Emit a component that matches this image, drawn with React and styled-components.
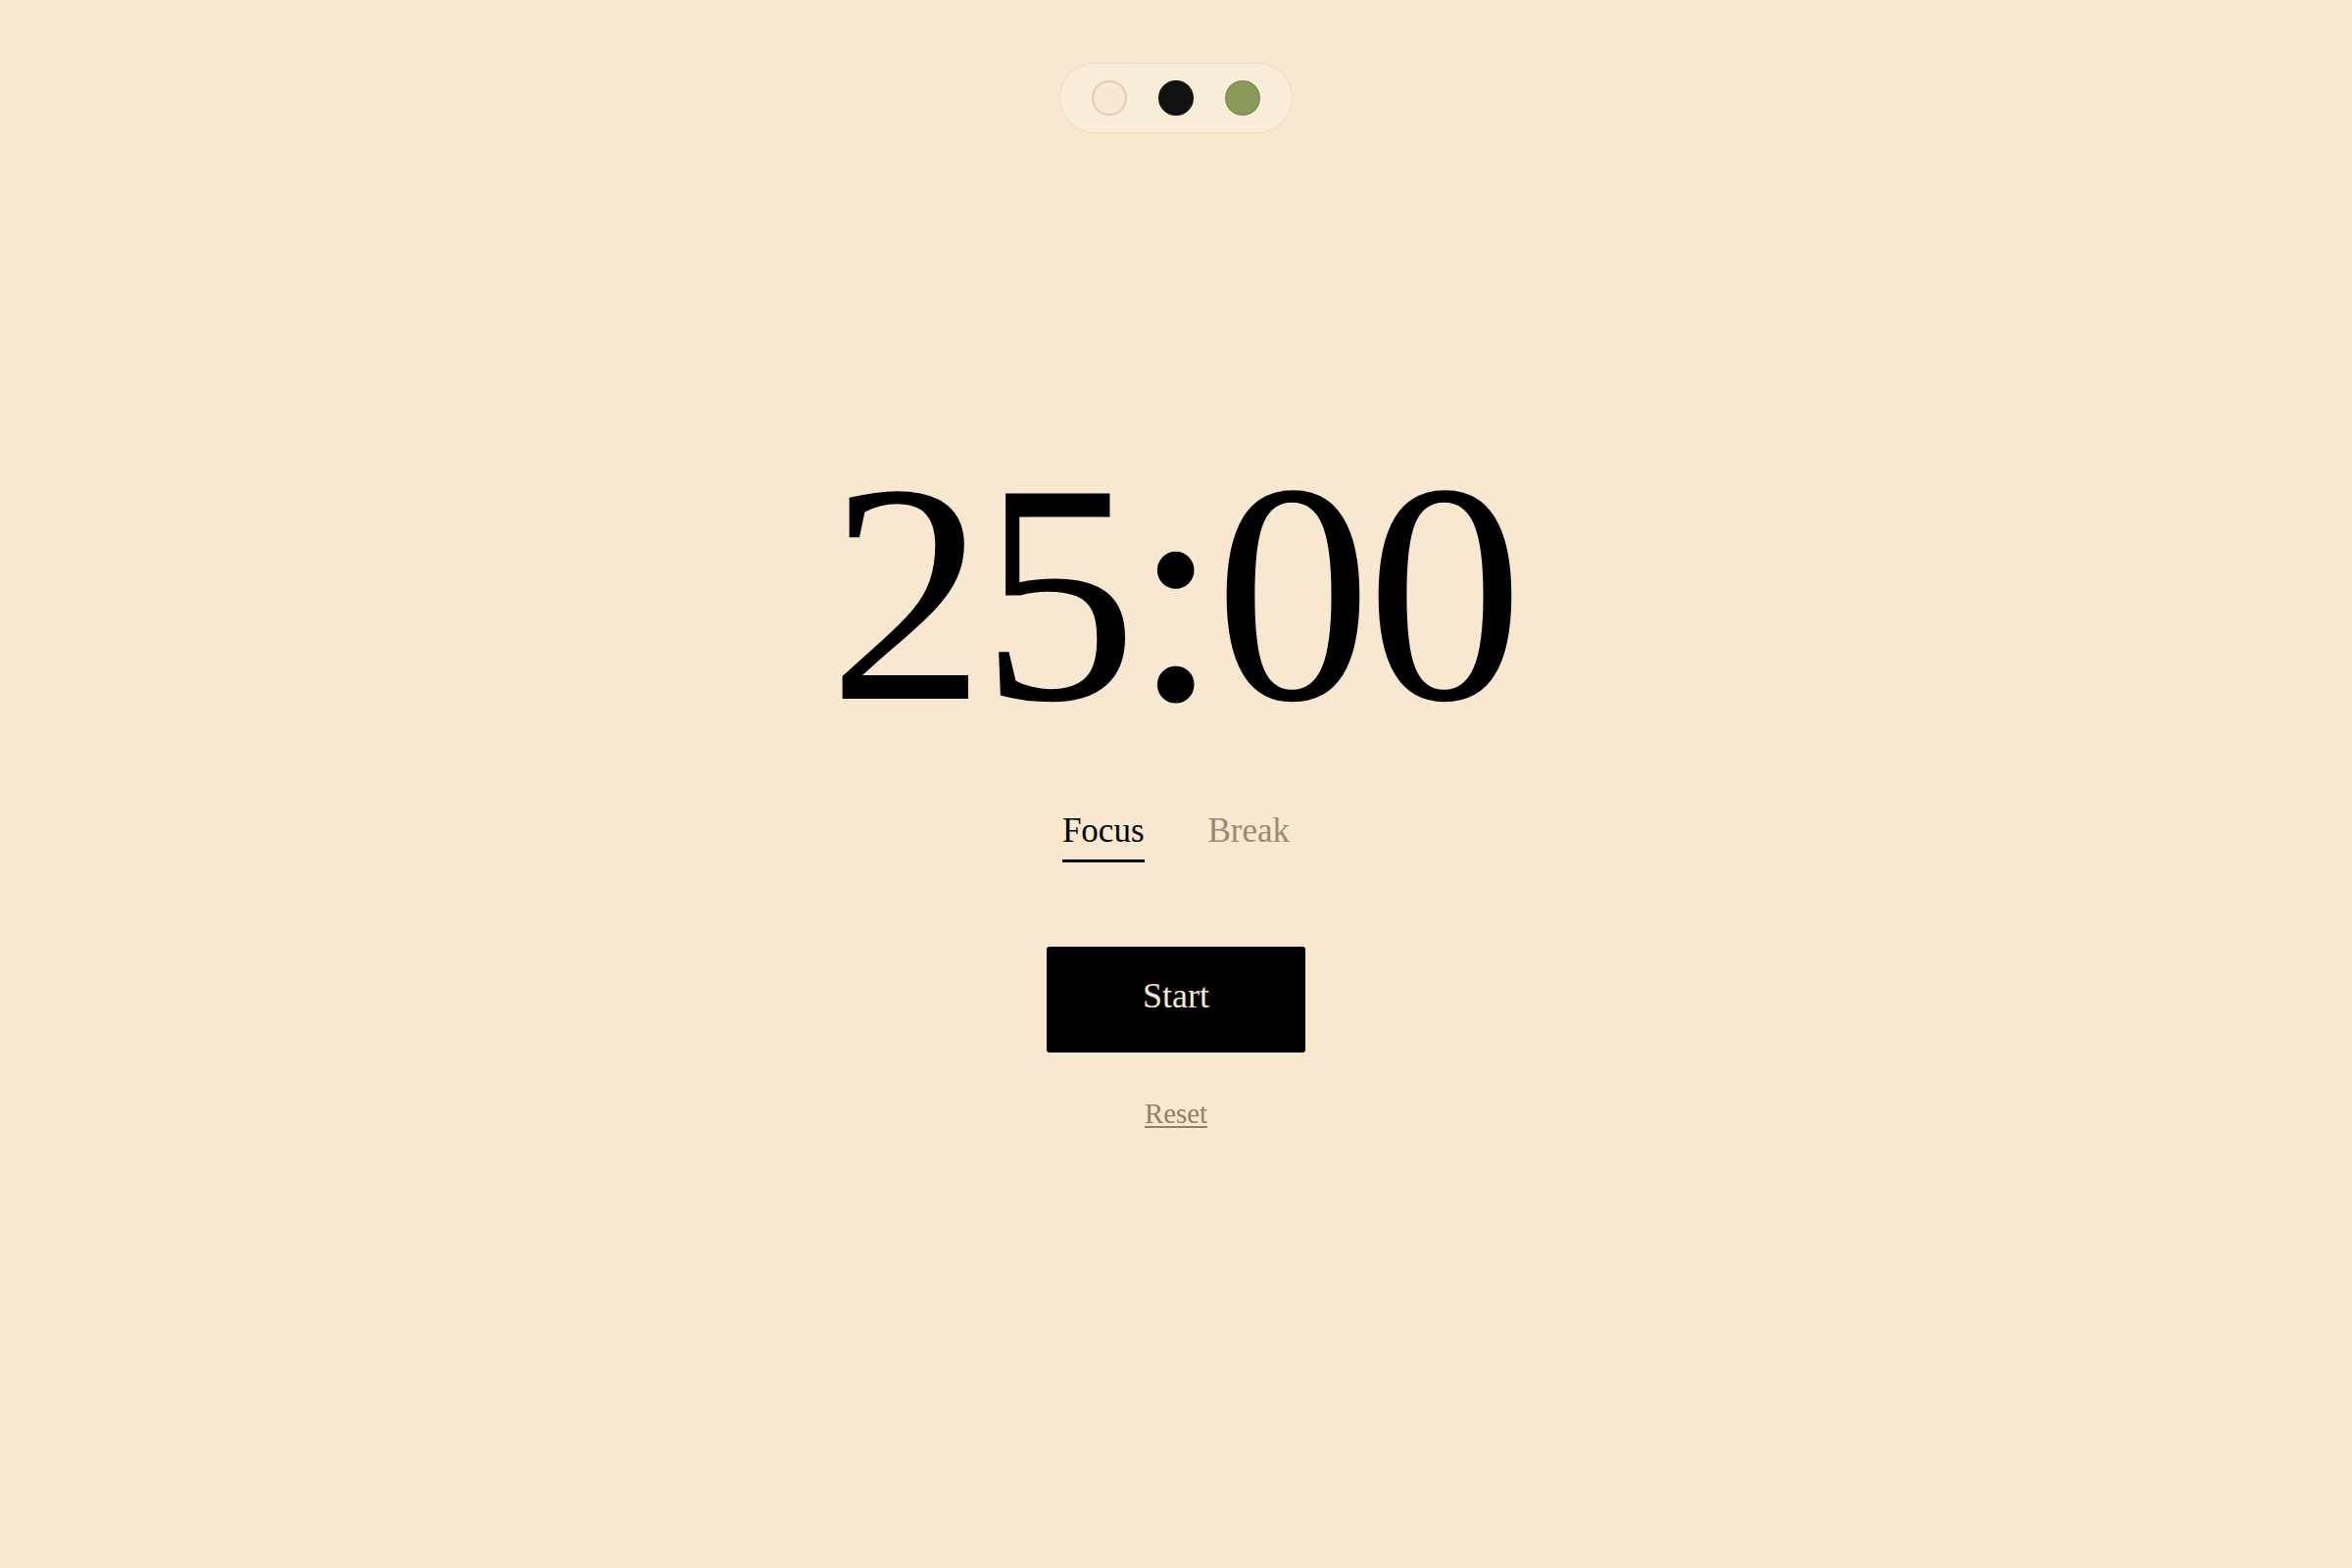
import { useState } from 'react';
import styled, { createGlobalStyle } from 'styled-components';

const GlobalStyle = createGlobalStyle`
    html, body {
        margin: 0;
        padding: 0;
        background-color: #f8e8cf;
    }

    body {
        font-family: "Liberation Serif", "Times New Roman", serif;
        color: #000;
    }
`;

const Page = styled.div`
    min-height: 100vh;
    display: flex;
    flex-direction: column;
    align-items: center;
    box-sizing: border-box;
    padding-top: 64px;
`;

const ThemePicker = styled.div`
    display: flex;
    align-items: center;
    gap: 32px;
    padding: 17px 32px;
    border: 1px solid #eddcc5;
    border-radius: 999px;
    background-color: rgba(255, 255, 255, 0.22);
`;

const Swatch = styled.button`
    width: 36px;
    height: 36px;
    padding: 0;
    border-radius: 50%;
    box-sizing: border-box;
    background-color: ${p => p.$color};
    border: 2px solid ${p => p.$ring};
    cursor: pointer;
`;

const Timer = styled.div`
    margin-top: 309px;
    font-size: 320px;
    line-height: 1;
    letter-spacing: -5px;
    text-indent: -5px;
`;

const Tabs = styled.div`
    margin-top: 62px;
    display: flex;
    gap: 65px;
`;

const Tab = styled.button`
    font-family: inherit;
    font-size: 35px;
    line-height: 42px;
    padding: 0 0 8px;
    background: none;
    border: none;
    border-bottom: 3px solid ${p => p.$active ? '#000' : 'transparent'};
    color: ${p => p.$active ? '#000' : '#958b7a'};
    cursor: pointer;
`;

const StartButton = styled.button`
    margin-top: 86px;
    width: 264px;
    height: 108px;
    display: flex;
    align-items: center;
    justify-content: center;
    padding: 0 0 8px;
    background-color: #000;
    color: #f8e8cf;
    border: none;
    border-radius: 3px;
    font-family: inherit;
    font-size: 36px;
    cursor: pointer;
`;

const ResetLink = styled.button`
    margin-top: 46px;
    padding: 0;
    background: none;
    border: none;
    font-family: inherit;
    font-size: 28.8px;
    color: #8a8170;
    text-decoration: underline;
    text-underline-offset: 3px;
    cursor: pointer;
`;

const THEMES = [
    { color: '#f8e8cf', ring: '#dccdb9' },
    { color: '#111111', ring: '#111111' },
    { color: '#8a9a5b', ring: '#7f8f52' },
];

function App() {
    const [mode, setMode] = useState('focus')

    return (
        <>
            <GlobalStyle />
            <Page>
                <ThemePicker>
                    {THEMES.map((t, i) =>
                        <Swatch key={i} $color={t.color} $ring={t.ring} aria-label={`theme ${i + 1}`} />
                    )}
                </ThemePicker>

                <Timer>{mode === 'focus' ? '25:00' : '05:00'}</Timer>

                <Tabs>
                    <Tab $active={mode === 'focus'} onClick={() => setMode('focus')}>Focus</Tab>
                    <Tab $active={mode === 'break'} onClick={() => setMode('break')}>Break</Tab>
                </Tabs>

                <StartButton>Start</StartButton>
                <ResetLink>Reset</ResetLink>
            </Page>
        </>
    )
}

export default App;
